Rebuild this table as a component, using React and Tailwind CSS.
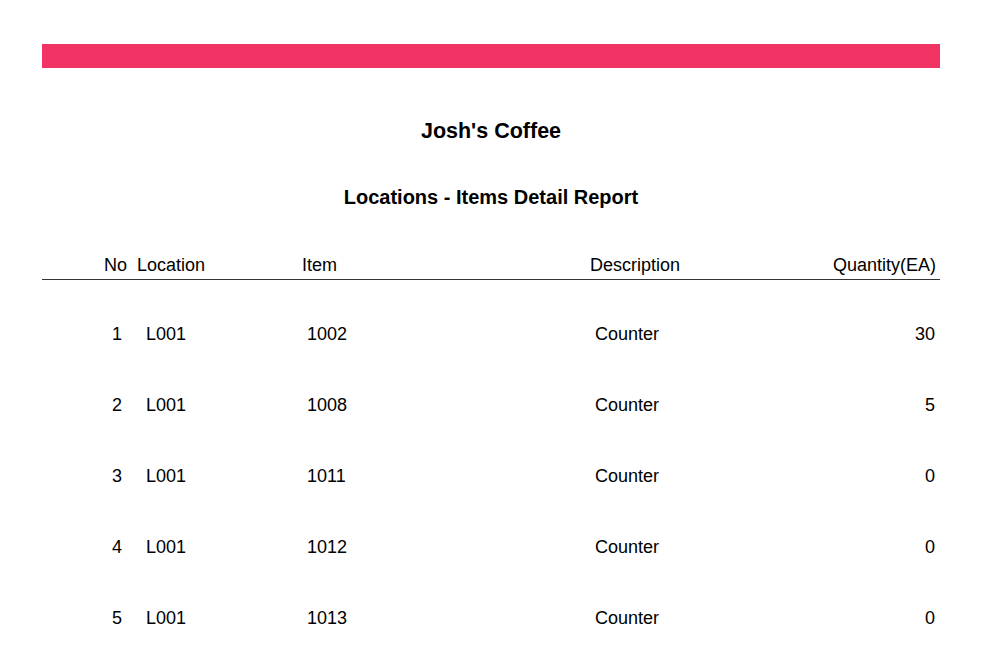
const rows = [
  { no: 1, location: 'L001', item: '1002', description: 'Counter', qty: 30 },
  { no: 2, location: 'L001', item: '1008', description: 'Counter', qty: 5 },
  { no: 3, location: 'L001', item: '1011', description: 'Counter', qty: 0 },
  { no: 4, location: 'L001', item: '1012', description: 'Counter', qty: 0 },
  { no: 5, location: 'L001', item: '1013', description: 'Counter', qty: 0 },
];

export default function App() {
  return (
    <div className="min-h-[645px] bg-white px-[42px] pt-[44px] text-black font-['Liberation_Sans',Arial,sans-serif]">
      {/* accent bar */}
      <div className="h-[24px] bg-[#f13463]" />

      <h1 className="mt-[50px] text-center text-[21.5px] leading-[26px] font-bold">
        Josh&apos;s Coffee
      </h1>
      <h2 className="mt-[41px] text-center text-[20px] leading-[24px] font-bold">
        Locations - Items Detail Report
      </h2>

      {/* header */}
      <div className="mt-[45px] flex pb-[3px] border-b border-[#333] text-[18px] leading-[22px]">
        <div className="w-[85px] text-right">No</div>
        <div className="w-[175px] pl-[10px]">Location</div>
        <div className="w-[288px]">Item</div>
        <div className="w-[200px]">Description</div>
        <div className="flex-1 text-right pr-[4px]">Quantity(EA)</div>
      </div>

      {/* rows */}
      <div className="pt-[18px]">
        {rows.map((r) => (
          <div key={r.no} className="flex h-[71px] items-center text-[18px] leading-[22px]">
            <div className="w-[80px] text-right">{r.no}</div>
            <div className="w-[185px] pl-[24px]">{r.location}</div>
            <div className="w-[288px]">{r.item}</div>
            <div className="w-[200px]">{r.description}</div>
            <div className="flex-1 text-right pr-[5px]">{r.qty}</div>
          </div>
        ))}
      </div>
    </div>
  );
}
